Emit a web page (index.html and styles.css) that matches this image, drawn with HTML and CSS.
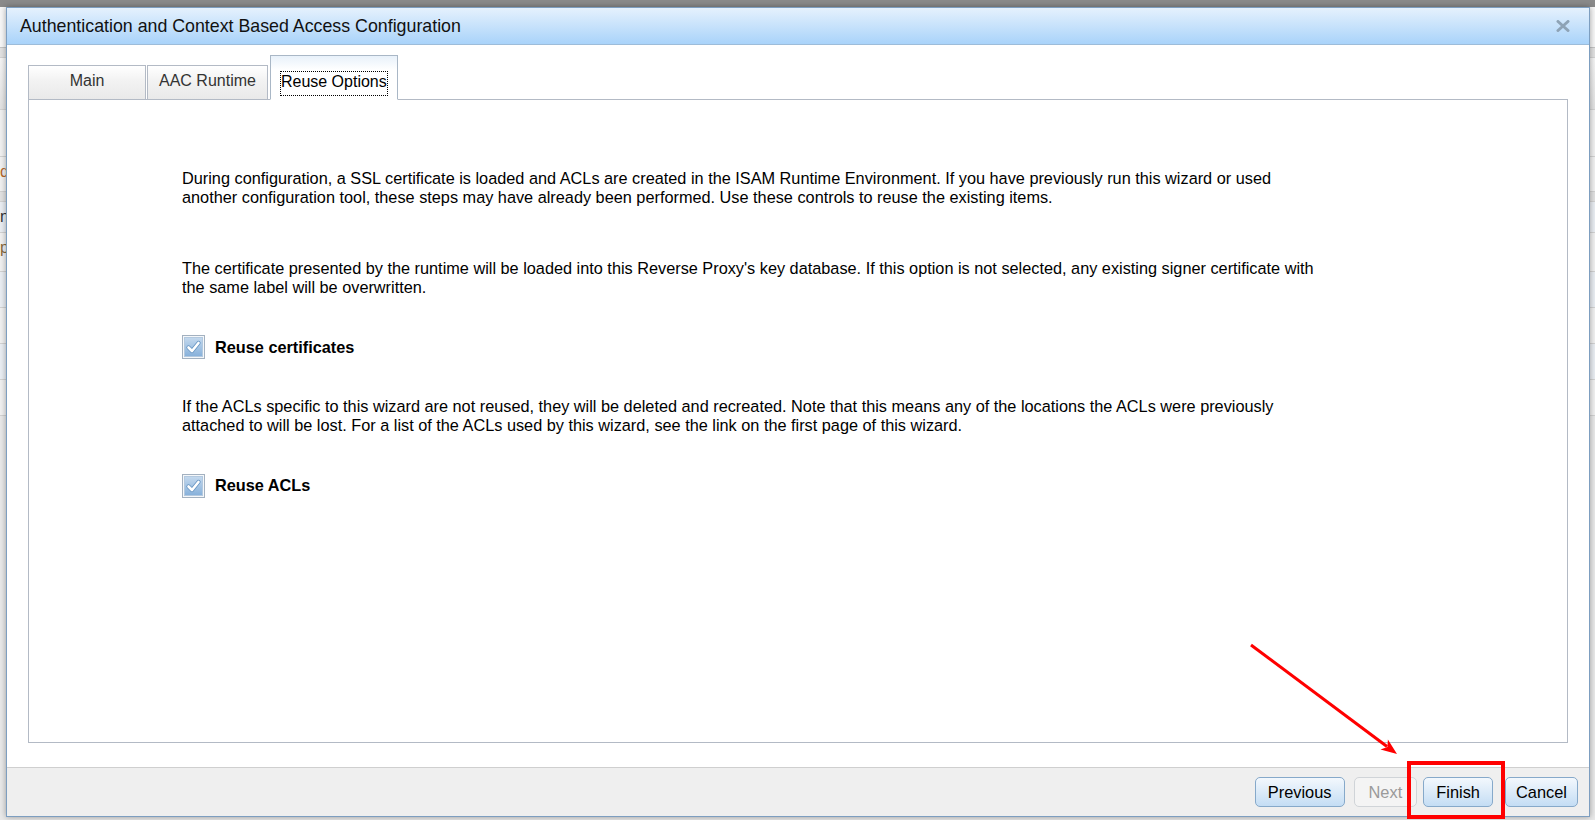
FILE: index.html
```html
<!DOCTYPE html>
<html lang="en">
<head>
  <meta charset="UTF-8">
  <meta name="viewport" content="width=device-width, initial-scale=1.0">
  <title>Authentication and Context Based Access Configuration</title>
  <link rel="stylesheet" href="styles.css">
</head>
<body>
  <div class="topbar"></div>
  <div class="backdrop">
    <div class="bg-row bg-head"></div>
    <div class="bg-row bg-thin"></div>
    <div class="bg-row bg-grad h52"></div>
    <div class="bg-row h47"></div>
    <div class="bg-row h35"><span class="bg-text orange">di</span></div>
    <div class="bg-row bg-thin"></div>
    <div class="bg-row bg-blue h31"><span class="bg-text">n</span></div>
    <div class="bg-row h39"><span class="bg-text brown">p</span></div>
    <div class="bg-row bg-blue h36"></div>
    <div class="bg-row h36"></div>
    <div class="bg-row bg-blue h36"></div>
    <div class="bg-row h36"></div>
  </div>

  <div class="dialog">
    <div class="dialog-title">
      <span class="dialog-title-text">Authentication and Context Based Access Configuration</span>
      <span class="dialog-close">
        <svg width="14" height="12" viewBox="0 0 14 12">
          <path d="M2 1.5 L12 10.5 M12 1.5 L2 10.5" stroke="#8ea3b6" stroke-width="3" stroke-linecap="round"/>
        </svg>
      </span>
    </div>

    <div class="dialog-body">
      <div class="tabs">
        <div class="tab">Main</div>
        <div class="tab">AAC Runtime</div>
        <div class="tab selected"><span class="tab-label">Reuse Options</span></div>
      </div>

      <div class="tab-panel">
        <div class="reuse-form">
          <p class="intro">During configuration, a SSL certificate is loaded and ACLs are created in the ISAM Runtime Environment. If you have previously run this wizard or used another configuration tool, these steps may have already been performed. Use these controls to reuse the existing items.</p>

          <p>The certificate presented by the runtime will be loaded into this Reverse Proxy's key database. If this option is not selected, any existing signer certificate with the same label will be overwritten.</p>
          <label class="check-row">
            <span class="checkbox">
              <svg width="23" height="24" viewBox="0 0 23 24">
                <defs>
                  <linearGradient id="cbfill" x1="0" y1="0" x2="0" y2="1">
                    <stop offset="0" stop-color="#c4d9ee"/>
                    <stop offset="1" stop-color="#86b0da"/>
                  </linearGradient>
                </defs>
                <rect x="0.5" y="0.5" width="22" height="23" fill="#f4f7fa" stroke="#a3b1c0"/>
                <rect x="2.5" y="2.5" width="18" height="19" fill="url(#cbfill)" stroke="#b3c9df"/>
                <path d="M6.5 12.5 L10 16 L16.5 8" fill="none" stroke="#6594c2" stroke-width="4.2" stroke-linecap="round" stroke-linejoin="round"/>
                <path d="M6.5 12.5 L10 16 L16.5 8" fill="none" stroke="#fff" stroke-width="2.6" stroke-linecap="round" stroke-linejoin="round"/>
              </svg>
            </span>
            Reuse certificates
          </label>

          <p>If the ACLs specific to this wizard are not reused, they will be deleted and recreated. Note that this means any of the locations the ACLs were previously attached to will be lost. For a list of the ACLs used by this wizard, see the link on the first page of this wizard.</p>
          <label class="check-row">
            <span class="checkbox">
              <svg width="23" height="24" viewBox="0 0 23 24">
                <rect x="0.5" y="0.5" width="22" height="23" fill="#f4f7fa" stroke="#a3b1c0"/>
                <rect x="2.5" y="2.5" width="18" height="19" fill="url(#cbfill)" stroke="#b3c9df"/>
                <path d="M6.5 12.5 L10 16 L16.5 8" fill="none" stroke="#6594c2" stroke-width="4.2" stroke-linecap="round" stroke-linejoin="round"/>
                <path d="M6.5 12.5 L10 16 L16.5 8" fill="none" stroke="#fff" stroke-width="2.6" stroke-linecap="round" stroke-linejoin="round"/>
              </svg>
            </span>
            Reuse ACLs
          </label>
        </div>
      </div>
    </div>

    <div class="dialog-footer">
      <button class="btn">Previous</button>
      <button class="btn btn-next" disabled>Next</button>
      <button class="btn btn-finish">Finish</button>
      <button class="btn btn-cancel">Cancel</button>
    </div>
  </div>

  <!-- annotation over the screenshot -->
  <div class="callout-box"></div>
  <svg class="callout-arrow" width="1595" height="820" viewBox="0 0 1595 820">
    <line x1="1251" y1="645" x2="1387" y2="746.5" stroke="#f00" stroke-width="3"/>
    <polygon points="1397,754 1380.5,749.5 1387.4,746.9 1387.9,739.5" fill="#f00"/>
  </svg>
</body>
</html>
```

FILE: styles.css
```css
* {
  box-sizing: border-box;
}

body {
  margin: 0;
  width: 1595px;
  height: 820px;
  overflow: hidden;
  font-family: "Liberation Sans", Arial, sans-serif;
  background: #e9e9e9;
}

.topbar {
  height: 7px;
  background: #8a8a8a;
}

.bg-row {
  border-bottom: 1px solid #d2d2d2;
  background: #f1f1f1;
  font-size: 16px;
  line-height: 30px;
  overflow: hidden;
  white-space: nowrap;
}

.bg-head {
  height: 41px;
  background: #f7f7f7;
  border-bottom-color: #c4c4c4;
}

.bg-thin {
  height: 10px;
  background: #e2e2e2;
}

.bg-grad {
  background: linear-gradient(#f5f5f5, #e2e2e2);
}

.bg-blue {
  background: #eaeef3;
}

.h52 { height: 52px; }
.h47 { height: 47px; }
.h35 { height: 35px; }
.h31 { height: 31px; }
.h39 { height: 39px; }
.h36 { height: 36px; }

.bg-text {
  color: #333;
}

.bg-text.orange {
  color: #b5682c;
}

.bg-text.brown {
  color: #8a6a3a;
}

/* dialog */

.dialog {
  position: absolute;
  left: 6px;
  top: 7px;
  width: 1584px;
  height: 810px;
  border: 1px solid #7d9ec0;
  background: #fff;
  box-shadow: 0 0 6px rgba(0, 0, 0, 0.35);
  display: flex;
  flex-direction: column;
}

.dialog-title {
  height: 37px;
  flex: none;
  border-bottom: 1px solid #9dbcd9;
  background: linear-gradient(#e5f1fd, #a9d3fa);
  display: flex;
  align-items: center;
  justify-content: space-between;
  padding: 0 19px 0 13px;
}

.dialog-title-text {
  font-size: 17.8px;
  color: #111;
  padding-top: 1px;
}

.dialog-close {
  display: flex;
  width: 14px;
  height: 12px;
}

.dialog-body {
  flex: 1;
  display: flex;
  flex-direction: column;
  padding: 10px 21px 24px;
}

.tabs {
  display: flex;
  align-items: flex-end;
  gap: 1px;
  margin-bottom: -1px;
  position: relative;
  z-index: 1;
}

.tab {
  min-width: 118px;
  padding: 5px 11px 9px;
  border: 1px solid #b3bac5;
  background: linear-gradient(#ffffff, #f2f2f2 45%, #e9e9e9);
  font-size: 16px;
  line-height: 19px;
  color: #333;
  text-align: center;
  cursor: pointer;
}

.tab.selected {
  min-width: 0;
  margin-left: 1px;
  padding: 15px 9px 3px;
  border-color: #a9b7c6;
  border-bottom-color: #fff;
  background: linear-gradient(#e8f1fa, #ffffff 14px);
  color: #000;
}

.tab-label {
  display: block;
  padding: 0 0 4px;
  border: 1px dotted #000;
}

.tab-panel {
  flex: 1;
  border: 1px solid #b3bac5;
  background: #fff;
  padding: 69px 0 0 153px;
}

.reuse-form {
  width: 1136px;
  font-size: 16.3px;
  line-height: 19.3px;
  color: #000;
}

.reuse-form p {
  margin: 0 0 38px;
}

.reuse-form p.intro {
  margin-bottom: 51px;
}

.check-row {
  display: flex;
  align-items: center;
  gap: 10px;
  height: 24px;
  margin-bottom: 38px;
  font-weight: bold;
}

.checkbox {
  display: flex;
  width: 23px;
  height: 24px;
}

.dialog-footer {
  height: 49px;
  flex: none;
  border-top: 1px solid #cfcfcf;
  background: #efefef;
  display: flex;
  justify-content: flex-end;
  align-items: center;
  padding-right: 11px;
}

.btn {
  height: 30px;
  padding: 0 12px;
  border: 1px solid #86a9ca;
  border-radius: 5px;
  background: linear-gradient(#f3f8fd, #c4ddf4);
  font-family: "Liberation Sans", Arial, sans-serif;
  font-size: 16.4px;
  color: #000;
  cursor: pointer;
}

.btn-next {
  margin-left: 9px;
  padding: 0 14px;
}

.btn-finish {
  margin-left: 6px;
}

.btn-cancel {
  margin-left: 12px;
  padding: 0 10px;
}

.btn:disabled {
  border-color: #d0d4d8;
  background: #f4f4f4;
  color: #9a9a9a;
  cursor: default;
}

/* red annotation */

.callout-box {
  position: absolute;
  left: 1407px;
  top: 761px;
  width: 98px;
  height: 58px;
  border: 4px solid #f00;
}

.callout-arrow {
  position: absolute;
  left: 0;
  top: 0;
  pointer-events: none;
}
```
